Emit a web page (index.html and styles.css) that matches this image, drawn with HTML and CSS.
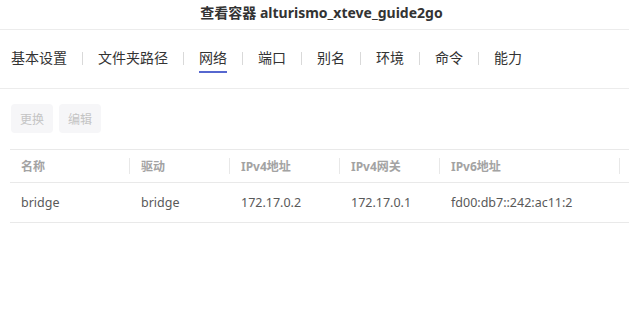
FILE: index.html
```html
<!DOCTYPE html>
<html lang="zh-CN">
<head>
  <meta charset="UTF-8">
  <title>查看容器</title>
  <link rel="stylesheet" href="styles.css">
</head>
<body>
  <div class="dialog">
    <div class="dialog-header">查看容器 alturismo_xteve_guide2go</div>

    <div class="tabs">
      <span class="tab">基本设置</span>
      <span class="tab-sep"></span>
      <span class="tab">文件夹路径</span>
      <span class="tab-sep"></span>
      <span class="tab active">网络</span>
      <span class="tab-sep"></span>
      <span class="tab">端口</span>
      <span class="tab-sep"></span>
      <span class="tab">别名</span>
      <span class="tab-sep"></span>
      <span class="tab">环境</span>
      <span class="tab-sep"></span>
      <span class="tab">命令</span>
      <span class="tab-sep"></span>
      <span class="tab">能力</span>
    </div>

    <div class="toolbar">
      <button class="btn" disabled>更换</button>
      <button class="btn" disabled>编辑</button>
    </div>

    <div class="table-wrap">
      <table class="grid">
        <colgroup>
          <col style="width:120px">
          <col style="width:100px">
          <col style="width:110px">
          <col style="width:100px">
          <col style="width:180px">
          <col style="width:100px">
        </colgroup>
        <thead>
          <tr>
            <th>名称</th>
            <th>驱动</th>
            <th>IPv4地址</th>
            <th>IPv4网关</th>
            <th>IPv6地址</th>
            <th></th>
          </tr>
        </thead>
        <tbody>
          <tr>
            <td>bridge</td>
            <td>bridge</td>
            <td>172.17.0.2</td>
            <td>172.17.0.1</td>
            <td>fd00:db7::242:ac11:2</td>
            <td></td>
          </tr>
        </tbody>
      </table>
    </div>
  </div>
</body>
</html>
```

FILE: styles.css
```css
html, body {
  margin: 0;
  padding: 0;
  background: #fff;
  font-family: "Noto Sans", "Noto Sans CJK SC", sans-serif;
  color: #333;
  overflow: hidden;
}

.dialog {
  width: 629px;
  height: 327px;
  overflow: hidden;
}

.dialog-header {
  height: 25px;
  line-height: 25px;
  padding-bottom: 4px;
  border-bottom: 1px solid #ececec;
  text-align: center;
  font-size: 14px;
  font-weight: bold;
  color: #333;
  padding-left: 14px;
}

.tabs {
  display: flex;
  align-items: center;
  gap: 15px;
  padding: 18px 0 15px 11px;
  border-bottom: 1px solid #ececec;
}

.tab {
  font-size: 14px;
  line-height: 20px;
  padding-bottom: 3px;
  border-bottom: 2px solid transparent;
  color: #333;
  cursor: pointer;
}

.tab.active {
  border-bottom-color: #5667cf;
}

.tab-sep {
  width: 1px;
  height: 13px;
  background: #d9d9d9;
  margin-top: -4px;
}

.toolbar {
  display: flex;
  gap: 6px;
  padding: 15px 0 0 11px;
}

.btn {
  height: 29px;
  padding: 0 9px;
  border: none;
  border-radius: 4px;
  background: #f6f6f8;
  color: #c4c4c4;
  font-family: "Noto Sans CJK SC", sans-serif;
  font-size: 12px;
}

.table-wrap {
  margin: 16px 0 0 10px;
  overflow: hidden;
}

.grid {
  border-collapse: collapse;
  table-layout: fixed;
  width: 710px;
}

.grid th,
.grid td {
  text-align: left;
  padding: 0 0 0 11px;
  white-space: nowrap;
}

.grid th {
  height: 32px;
  font-size: 12px;
  font-weight: bold;
  color: #a3a3a3;
  border-top: 1px solid #e9e9e9;
  border-bottom: 1px solid #e9e9e9;
  background: linear-gradient(#e8e8e8, #e8e8e8) no-repeat right center / 1px 16px;
}

.grid td {
  height: 39px;
  font-size: 12.5px;
  color: #595959;
  border-bottom: 1px solid #e9e9e9;
}
```
